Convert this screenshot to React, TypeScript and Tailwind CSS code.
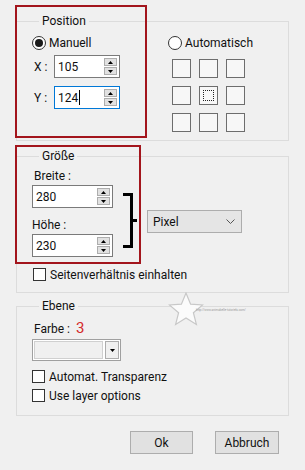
import React from 'react';

function Triangle({ down }: { down?: boolean }) {
  return (
    <svg width="5" height="3" viewBox="0 0 5 3" className="block">
      {down ? <path d="M0 0h5L2.5 3z" fill="#000" /> : <path d="M0 3h5L2.5 0z" fill="#000" />}
    </svg>
  );
}

function Spin({ value, width, focused }: { value: string; width: string; focused?: boolean }) {
  return (
    <div
      className={`${width} h-[23px] bg-white border flex items-center pl-[3px] pr-[2px] ${
        focused ? 'border-[#0078d7]' : 'border-[#7a7a7a]'
      }`}
    >
      <span className="flex-1 leading-[16px] flex items-center">
        {value}
        {focused && <span className="inline-block w-px h-[15px] bg-black ml-px" />}
      </span>
      <div className="flex flex-col gap-[1px]">
        <div className="w-[13px] h-[8px] bg-[#e1e1e1] border border-[#adadad] flex items-center justify-center">
          <Triangle />
        </div>
        <div className="w-[13px] h-[8px] bg-[#e1e1e1] border border-[#adadad] flex items-center justify-center">
          <Triangle down />
        </div>
      </div>
    </div>
  );
}

function Radio({ checked, label }: { checked?: boolean; label: string }) {
  return (
    <div className="flex items-center h-[14px] gap-[3px]">
      <span className="w-[14px] h-[14px] rounded-full border border-[#333] bg-white flex items-center justify-center">
        {checked && <span className="w-[8px] h-[8px] rounded-full bg-[#1a1a1a]" />}
      </span>
      <span className="leading-[16px]">{label}</span>
    </div>
  );
}

function Check({ label }: { label: string }) {
  return (
    <div className="flex items-center h-[13px] gap-[4px]">
      <span className="w-[13px] h-[13px] border border-[#333] bg-white" />
      <span className="leading-[16px]">{label}</span>
    </div>
  );
}

function Group({ title, className, children }: { title: string; className: string; children: React.ReactNode }) {
  return (
    <fieldset className={`border border-[#dcdcdc] ${className}`}>
      <legend className="ml-[7px] px-[3px] leading-[16px]">{title}</legend>
      {children}
    </fieldset>
  );
}

function Button({ label, width }: { label: string; width: string }) {
  return (
    <div className={`${width} h-[23px] bg-[#e1e1e1] border border-[#adadad] flex items-center justify-center leading-[16px]`}>
      {label}
    </div>
  );
}

export default function App() {
  const cells = [0, 1, 2, 3, 4, 5, 6, 7, 8];
  return (
    <div className="w-[305px] h-[470px] bg-[#f0f0f0] relative px-[16px] pt-[13px] text-[12px] text-[#111] font-['Segoe_UI',Roboto,sans-serif] overflow-hidden">
      <Group title="Position" className="h-[128px] pl-[15px]">
        <div className="flex">
          <div className="w-[136px] flex flex-col">
            <div className="mt-[7px]">
              <Radio checked label="Manuell" />
            </div>
            <div className="mt-[5px] flex items-center">
              <span className="w-[22px] pl-[2px] leading-[16px]">X :</span>
              <Spin value="105" width="w-[66px]" />
            </div>
            <div className="mt-[8px] flex items-center">
              <span className="w-[22px] pl-[2px] leading-[16px]">Y :</span>
              <Spin value="124" width="w-[66px]" focused />
            </div>
          </div>
          <div className="flex flex-col">
            <div className="mt-[7px]">
              <Radio label="Automatisch" />
            </div>
            <div className="mt-[9px] ml-[4px] grid grid-cols-[19px_19px_19px] gap-[8px]">
              {cells.map((i) => (
                <div key={i} className="w-[19px] h-[19px] border border-[#6d6d6d] bg-[#f7f7f7] flex items-center justify-center">
                  {i === 4 && <div className="w-[11px] h-[11px] border border-dotted border-[#222]" />}
                </div>
              ))}
            </div>
          </div>
        </div>
      </Group>

      <Group title="Größe" className="mt-[7px] h-[145px] pl-[15px]">
        <div className="flex">
          <div className="w-[81px] flex flex-col">
            <span className="mt-[4px] pl-[2px] leading-[16px]">Breite :</span>
            <div className="mt-[1px]">
              <Spin value="280" width="w-[81px]" />
            </div>
            <span className="mt-[9px] leading-[16px]">Höhe :</span>
            <div className="mt-[1px]">
              <Spin value="230" width="w-[81px]" />
            </div>
          </div>
          <svg width="15" height="55" viewBox="0 0 15 55" className="mt-[29px] ml-[10px]">
            <path d="M0 1.5h8.5v52H0M8.5 27.5H14" stroke="#000" strokeWidth="3" fill="none" />
          </svg>
          <div className="mt-[46px] ml-[9px] w-[95px] h-[23px] bg-[#e5e5e5] border border-[#adadad] flex items-center pl-[5px] pr-[6px]">
            <span className="flex-1 leading-[16px]">Pixel</span>
            <svg width="9" height="5" viewBox="0 0 9 5">
              <path d="M0.5 0.5l4 4 4-4" stroke="#555" fill="none" />
            </svg>
          </div>
        </div>
        <div className="mt-[11px] pl-[1px]">
          <Check label="Seitenverhältnis einhalten" />
        </div>
      </Group>

      <Group title="Ebene" className="mt-[5px] h-[118px] pl-[15px]">
        <div className="mt-[6px] flex items-baseline pl-[2px] leading-[16px]">
          <span>Farbe :</span>
          <span className="ml-[6px] text-[15px] text-[#d42a2a]">3</span>
        </div>
        <div className="mt-[2px] w-[89px] h-[22px] border border-[#a0a0a0] bg-white flex p-[1px] gap-[2px]">
          <div className="flex-1 bg-[#f0f0f0] border border-[#d0d0d0]" />
          <div className="w-[14px] bg-[#f0f0f0] border border-[#adadad] flex items-center justify-center">
            <Triangle down />
          </div>
        </div>
        <div className="mt-[9px]">
          <Check label="Automat. Transparenz" />
        </div>
        <div className="mt-[6px]">
          <Check label="Use layer options" />
        </div>
      </Group>

      <div className="mt-[15px] flex justify-end gap-[22px] pr-[10px]">
        <Button label="Ok" width="w-[63px]" />
        <Button label="Abbruch" width="w-[64px]" />
      </div>

      {/* red annotation frames */}
      <div className="absolute left-[15px] top-[5px] w-[132px] h-[133px] border-2 border-[#a3151c]" />
      <div className="absolute left-[15px] top-[145px] w-[126px] h-[119px] border-2 border-[#a3151c]" />

      {/* watermark */}
      <div className="absolute left-[168px] top-[292px] flex items-end">
        <svg width="36" height="34" viewBox="0 0 36 34">
          <path
            d="M18 1l4.6 11.2 12 .8-9.2 7.7 3 11.8L18 26l-10.4 6.5 3-11.8L1.4 13l12-.8z"
            fill="#fbfbfb"
            stroke="#c8c8c8"
            strokeWidth="1.2"
          />
        </svg>
        <span className="-ml-[8px] mb-[14px] text-[3px] leading-[3px] text-[#9a9a9a] whitespace-nowrap">
          http://www.animabelle-tutoriels.com/
        </span>
      </div>
    </div>
  );
}
